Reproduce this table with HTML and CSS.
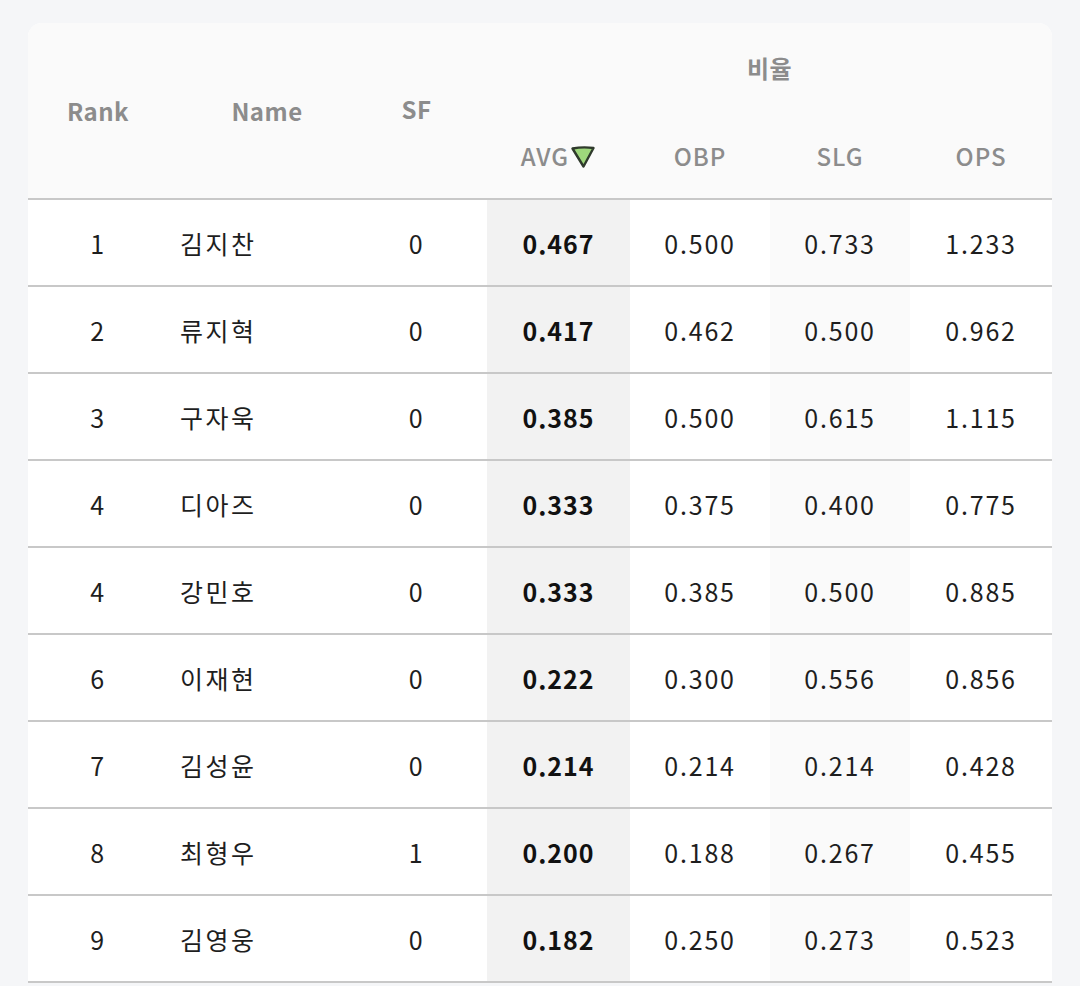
FILE: index.html
```html
<!DOCTYPE html>
<html lang="ko">
<head>
<meta charset="utf-8">
<link rel="stylesheet" href="styles.css">
</head>
<body>
<div class="card">
  <table class="stats">
    <colgroup>
      <col class="c-rank"><col class="c-name"><col class="c-sf"><col class="c-avg"><col class="c-obp"><col class="c-slg"><col class="c-ops">
    </colgroup>
    <thead>
      <tr class="h1">
        <th rowspan="2" class="sticky">Rank</th>
        <th rowspan="2" class="sticky">Name</th>
        <th rowspan="2" class="sf">SF</th>
        <th colspan="4" class="group">비율</th>
      </tr>
      <tr class="h2">
        <th class="sorted">AVG<svg class="tri" width="26" height="24" viewBox="0 0 26 24"><path d="M2.5 3.5 Q13 1.5 23.5 3 L13.5 21.5 Z" fill="#9ed77c" stroke="#2f3a2c" stroke-width="2.4" stroke-linejoin="round"/></svg></th>
        <th>OBP</th>
        <th>SLG</th>
        <th>OPS</th>
      </tr>
    </thead>
    <tbody>
      <tr><td class="sticky">1</td><td class="sticky name">김지찬</td><td class="sf">0</td><td class="avg">0.467</td><td>0.500</td><td class="slg">0.733</td><td>1.233</td></tr>
      <tr><td class="sticky">2</td><td class="sticky name">류지혁</td><td class="sf">0</td><td class="avg">0.417</td><td>0.462</td><td class="slg">0.500</td><td>0.962</td></tr>
      <tr><td class="sticky">3</td><td class="sticky name">구자욱</td><td class="sf">0</td><td class="avg">0.385</td><td>0.500</td><td class="slg">0.615</td><td>1.115</td></tr>
      <tr><td class="sticky">4</td><td class="sticky name">디아즈</td><td class="sf">0</td><td class="avg">0.333</td><td>0.375</td><td class="slg">0.400</td><td>0.775</td></tr>
      <tr><td class="sticky">4</td><td class="sticky name">강민호</td><td class="sf">0</td><td class="avg">0.333</td><td>0.385</td><td class="slg">0.500</td><td>0.885</td></tr>
      <tr><td class="sticky">6</td><td class="sticky name">이재현</td><td class="sf">0</td><td class="avg">0.222</td><td>0.300</td><td class="slg">0.556</td><td>0.856</td></tr>
      <tr><td class="sticky">7</td><td class="sticky name">김성윤</td><td class="sf">0</td><td class="avg">0.214</td><td>0.214</td><td class="slg">0.214</td><td>0.428</td></tr>
      <tr><td class="sticky">8</td><td class="sticky name">최형우</td><td class="sf">1</td><td class="avg">0.200</td><td>0.188</td><td class="slg">0.267</td><td>0.455</td></tr>
      <tr><td class="sticky">9</td><td class="sticky name">김영웅</td><td class="sf">0</td><td class="avg">0.182</td><td>0.250</td><td class="slg">0.273</td><td>0.523</td></tr>
    </tbody>
  </table>
</div>
</body>
</html>
```

FILE: styles.css
```css
html, body {
  margin: 0;
  padding: 0;
  background: #f5f6f8;
  height: 100%;
  overflow: hidden;
}
body {
  padding: 23px 28px 0 28px;
  font-family: "Noto Sans CJK KR", "Noto Sans", sans-serif;
}
.card {
  width: 1024px;
  background: #ffffff;
  border-radius: 14px 14px 0 0;
  overflow: hidden;
}
.stats {
  width: 1024px;
  border-collapse: separate;
  border-spacing: 0;
  table-layout: fixed;
}
.c-rank { width: 140px; }
.c-name { width: 198px; }
.c-sf { width: 121px; }
.c-avg { width: 143px; }
.c-obp { width: 140px; }
.c-slg { width: 140px; }
.c-ops { width: 142px; }

thead th {
  background: #fafafa;
  color: #8c8c8c;
  font-weight: 700;
  font-size: 24px;
  letter-spacing: 0.5px;
  text-align: center;
  padding: 0;
}
.h1 th { height: 89px; }
.h1 th.sticky, .h1 th.sf {
  border-bottom: 2px solid #c8c8c8;
}
.h1 th.sf { padding-right: 20px; padding-bottom: 4px; }
.h1 th.group { vertical-align: middle; }
.h2 th {
  height: 86px;
  border-bottom: 2px solid #c8c8c8;
  font-weight: 500;
  vertical-align: middle;
  letter-spacing: 1px;
}
.h2 th.sorted { white-space: nowrap; }
.tri {
  vertical-align: -3px;
  margin-left: 1px;
}

tbody td {
  height: 85px;
  padding: 0;
  border-bottom: 2px solid #c8c8c8;
  text-align: center;
  font-size: 25px;
  font-weight: 400;
  letter-spacing: 1.8px;
  color: #1e1e1e;
  background: #ffffff;
}
tbody td.name {
  text-align: left;
  padding-left: 12px;
  font-size: 25px;
  letter-spacing: 2.5px;
}
tbody td.sf { padding-right: 20px; }
tbody td.avg {
  background: #f2f2f2;
  font-weight: 700;
  color: #111111;
  letter-spacing: 1px;
}
tbody td.slg { background: #fafafa; }
```
